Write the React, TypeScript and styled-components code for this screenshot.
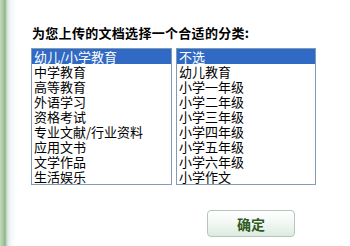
import styled, { createGlobalStyle } from "styled-components";

const GlobalStyle = createGlobalStyle`
    html, body {
        margin: 0;
        padding: 0;
        background: #ffffff;
    }
    body {
        font-family: "Noto Sans CJK SC", "Liberation Sans", sans-serif;
    }
`

const Page = styled.div`
    display: flex;
    flex-direction: row;
    width: 350px;
    height: 246px;
    overflow: hidden;
    background: linear-gradient(to right, #c4dcb8 0px, #a9c9a0 3px, #8fb489 5px, #cfe0d4 7px, #e8f1f1 9px, #f6fafa 12px, #ffffff 16px);
`

const Content = styled.div`
    display: flex;
    flex-direction: column;
    padding: 25px 0 0 31px;
`

const Title = styled.div`
    font-size: 13px;
    line-height: 16px;
    font-weight: bold;
    color: #000000;
    margin: 0 0 7px 1px;
    letter-spacing: 0.3px;
`

const Lists = styled.div`
    display: flex;
    flex-direction: row;
    gap: 4px;
`

const ListBox = styled.div<{ $width: number }>`
    width: ${p => p.$width}px;
    height: 137px;
    box-sizing: border-box;
    border: 1px solid #7f9db9;
    background: #ffffff;
`

const Option = styled.div<{ $selected?: boolean }>`
    height: 15px;
    line-height: 15px;
    font-size: 13px;
    padding-left: 2px;
    white-space: nowrap;
    color: ${p => p.$selected ? "#ffffff" : "#000000"};
    background: ${p => p.$selected ? "#316ac5" : "transparent"};
`

const Footer = styled.div`
    display: flex;
    flex-direction: row;
    padding: 25px 0 0 176px;
`

const Button = styled.button`
    width: 88px;
    height: 27px;
    box-sizing: border-box;
    border: 1px solid #b3c7bd;
    border-radius: 4px;
    background: linear-gradient(to bottom, #ffffff 0%, #f3f8f4 45%, #dcebe0 100%);
    color: #2f5a1f;
    font-family: "Noto Sans CJK SC", "Liberation Sans", sans-serif;
    font-size: 14px;
    font-weight: bold;
    cursor: pointer;
    padding: 0;
`

const categories = ["幼儿/小学教育", "中学教育", "高等教育", "外语学习", "资格考试", "专业文献/行业资料", "应用文书", "文学作品", "生活娱乐"]
const subCategories = ["不选", "幼儿教育", "小学一年级", "小学二年级", "小学三年级", "小学四年级", "小学五年级", "小学六年级", "小学作文"]

export default function App() {
    return (
        <>
            <GlobalStyle />
            <Page>
                <Content>
                    <Title>为您上传的文档选择一个合适的分类:</Title>
                    <Lists>
                        <ListBox $width={141}>
                            {categories.map((c, i) => (
                                <Option key={c} $selected={i === 0}>{c}</Option>
                            ))}
                        </ListBox>
                        <ListBox $width={140}>
                            {subCategories.map((c, i) => (
                                <Option key={c} $selected={i === 0}>{c}</Option>
                            ))}
                        </ListBox>
                    </Lists>
                    <Footer>
                        <Button>确定</Button>
                    </Footer>
                </Content>
            </Page>
        </>
    )
}
